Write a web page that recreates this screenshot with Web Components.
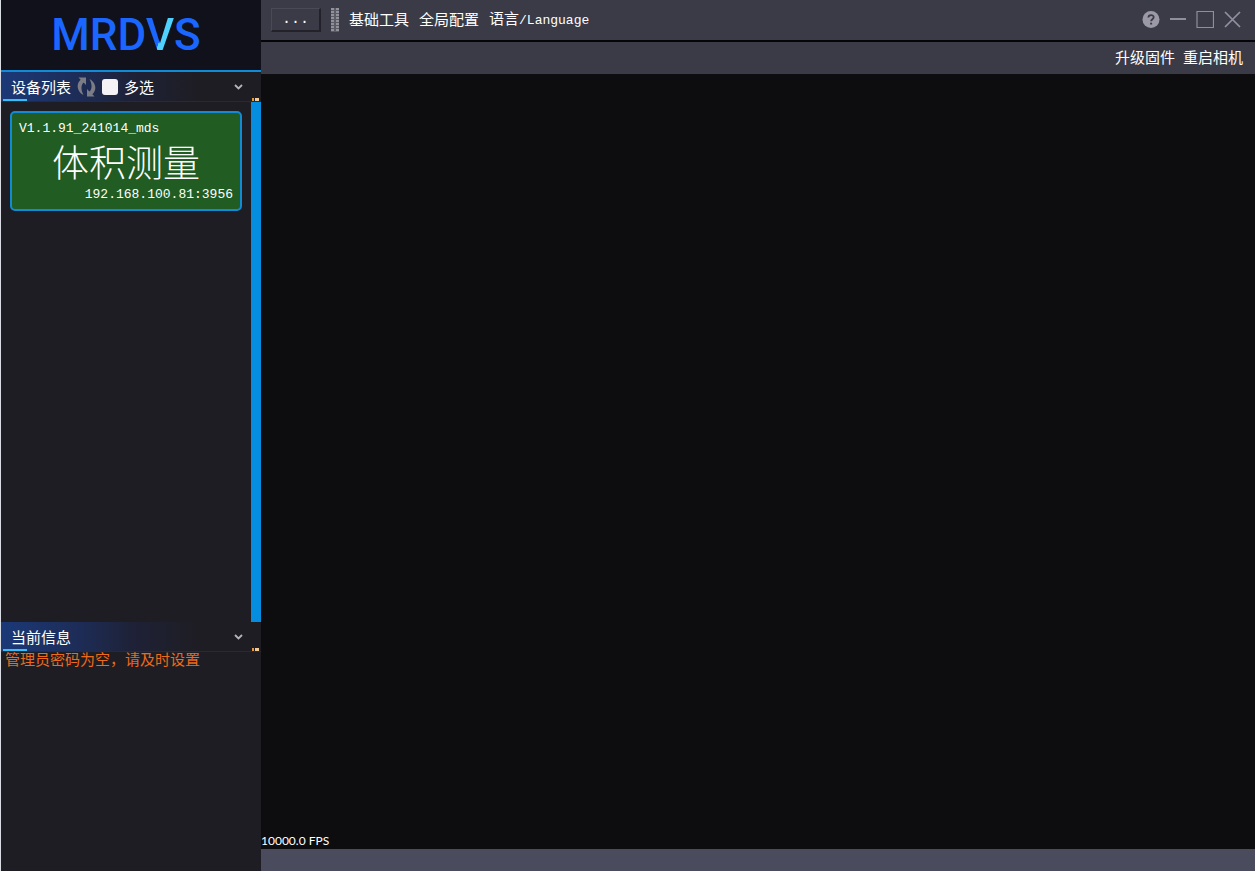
<!DOCTYPE html>
<html lang="zh">
<head>
<meta charset="utf-8">
<title>MRDVS</title>
<style>
  html, body { height: 100%; margin: 0; }
  body {
    background: #0d0c0f;
    color: #ffffff;
    font: 15px/20px "Noto Sans CJK SC", "Liberation Sans", sans-serif;
  }
</style>
</head>
<body>
<viewer-app>
  <brand-logo slot="side"></brand-logo>
  <side-panel slot="side" class="devices" heading="设备列表">
    <device-tools slot="tools"></device-tools>
    <device-list>
      <device-card version="V1.1.91_241014_mds" address="192.168.100.81:3956">体积测量</device-card>
    </device-list>
  </side-panel>
  <side-panel slot="side" class="info" heading="当前信息">
    <info-message>管理员密码为空，请及时设置</info-message>
  </side-panel>
  <title-bar slot="main"></title-bar>
  <camera-bar slot="main">
    <menu-button>升级固件</menu-button>
    <menu-button>重启相机</menu-button>
  </camera-bar>
  <camera-view slot="main" fps="10000.0"></camera-view>
  <status-bar slot="main"></status-bar>
</viewer-app>

<script>
const buttonReset = `
    button {
        padding: 0;
        border: none;
        background: none;
        color: inherit;
        font: inherit;
        cursor: pointer;
    }
`;

class ViewerApp extends HTMLElement {
  constructor() {
    super();
    this.attachShadow({ mode: "open" });
  }

  connectedCallback() {
    this.shadowRoot.innerHTML = `
    <style>
        :host { display: flex; height: 100vh; min-height: 400px; }
        aside {
            display: flex;
            flex-direction: column;
            flex: none;
            box-sizing: border-box;
            width: 261px;
            border-left: 1px solid #d9dce2;
            background: #1e1d23;
        }
        main { display: flex; flex-direction: column; flex: 1; min-width: 0; }
        ::slotted(.devices) { flex: 31 1 0; }
        ::slotted(.info) { flex: 14 1 0; }
        ::slotted(camera-view) { flex: 1; }
    </style>
    <aside><slot name="side"></slot></aside>
    <main><slot name="main"></slot></main>
    `;
  }
}

class BrandLogo extends HTMLElement {
  constructor() {
    super();
    this.attachShadow({ mode: "open" });
  }

  connectedCallback() {
    this.shadowRoot.innerHTML = `
    <style>
        :host {
            display: flex;
            align-items: center;
            justify-content: center;
            height: 70px;
            padding-right: 10px;
            border-bottom: 2px solid #128bd6;
            background: #10111a;
            color: #1a66ff;
            font: 500 44px/60px Roboto, sans-serif;
        }
        .beam {
            background: linear-gradient(108deg, #1a66ff 52%, #4fd2ff 53%);
            -webkit-background-clip: text;
            background-clip: text;
            color: transparent;
        }
    </style>
    <div>MRD<span class="beam">V</span>S</div>
    `;
  }
}

class SidePanel extends HTMLElement {
  constructor() {
    super();
    this.attachShadow({ mode: "open" });
  }

  connectedCallback() {
    this.shadowRoot.innerHTML = `
    <style>
        ${buttonReset}
        :host { display: flex; flex-direction: column; min-height: 0; }
        header {
            position: relative;
            display: flex;
            align-items: center;
            flex: none;
            box-sizing: border-box;
            height: 30px;
            gap: 6px;
            padding: 0 18px 0 10px;
            border-bottom: 1px solid #2a2a31;
            background: linear-gradient(90deg, #1b3978 0, #1d2c56 80px, #1e2238 130px, #1e1d23 200px);
        }
        h2 { margin: 0; font-size: 15px; font-weight: 400; }
        .fold { display: flex; margin-left: auto; }
        header::before {
            content: "";
            position: absolute;
            left: 2px;
            bottom: 0;
            width: 24px;
            height: 2px;
            background: #35c0f8;
        }
        header::after {
            content: "";
            position: absolute;
            right: 2px;
            bottom: 0;
            width: 7px;
            height: 3px;
            background: linear-gradient(90deg, #e79a3c 2px, #1e1d23 2px 3px, #f3c995 3px);
        }
    </style>
    <header>
        <h2>${this.getAttribute("heading")}</h2>
        <slot name="tools"></slot>
        <button class="fold" aria-label="折叠">
            <svg width="9" height="7" viewBox="0 0 9 7"><path d="M1 2L4.5 5.5L8 2" fill="none" stroke="#b4b4ba" stroke-width="1.8"/></svg>
        </button>
    </header>
    <slot></slot>
    `;
  }
}

class DeviceTools extends HTMLElement {
  constructor() {
    super();
    this.attachShadow({ mode: "open" });
  }

  connectedCallback() {
    this.shadowRoot.innerHTML = `
    <style>
        ${buttonReset}
        :host { display: flex; align-items: center; gap: 6px; }
        button { display: flex; }
        label { display: flex; align-items: center; gap: 6px; }
        input {
            appearance: none;
            width: 16px;
            height: 16px;
            margin: 0;
            border-radius: 3px;
            background: #f4f2f6;
        }
        input:checked { background: #128bd6; }
    </style>
    <button aria-label="刷新">
        <svg width="19" height="20" viewBox="0 0 19 20" fill="#7c7d84">
            <path d="M1.5 0.5H9V8L6.6 5.4C4 7.8 3.6 12.5 6.5 18C0.6 15 -1.6 7.6 3.6 2.8Z"/>
            <path d="M17.5 19.5H10V12L12.4 14.6C15 12.2 15.4 7.5 12.5 2C18.4 5 20.6 12.4 15.4 17.2Z"/>
        </svg>
    </button>
    <label><input type="checkbox">多选</label>
    `;
  }
}

class DeviceList extends HTMLElement {
  constructor() {
    super();
    this.attachShadow({ mode: "open" });
  }

  connectedCallback() {
    this.shadowRoot.innerHTML = `
    <style>
        :host { display: flex; flex: 1; min-height: 0; }
        .items { flex: 1; padding: 9px; }
        .scroll { width: 10px; background: #058de0; }
    </style>
    <div class="items"><slot></slot></div>
    <div class="scroll"></div>
    `;
  }
}

class DeviceCard extends HTMLElement {
  constructor() {
    super();
    this.attachShadow({ mode: "open" });
  }

  connectedCallback() {
    this.shadowRoot.innerHTML = `
    <style>
        :host {
            display: flex;
            flex-direction: column;
            padding: 6px 7px 4px;
            border: 2px solid #128bd6;
            border-radius: 5px;
            background: #215c22;
        }
        .meta { font: 13px/20px "Liberation Mono", monospace; }
        .name {
            margin-bottom: 2px;
            text-align: center;
            font-size: 37px;
            font-weight: 300;
            line-height: 44px;
        }
        .address { text-align: right; }
    </style>
    <div class="meta">${this.getAttribute("version")}</div>
    <div class="name"><slot></slot></div>
    <div class="meta address">${this.getAttribute("address")}</div>
    `;
  }
}

class InfoMessage extends HTMLElement {
  constructor() {
    super();
    this.attachShadow({ mode: "open" });
  }

  connectedCallback() {
    this.shadowRoot.innerHTML = `
    <style>
        :host { display: block; padding: 0 4px; color: #ec6a1c; line-height: 14px; }
    </style>
    <slot></slot>
    `;
  }
}

class MenuButton extends HTMLElement {
  constructor() {
    super();
    this.attachShadow({ mode: "open" });
  }

  connectedCallback() {
    this.shadowRoot.innerHTML = `
    <style>
        ${buttonReset}
        :host { display: block; }
        button { display: block; padding-bottom: 2px; white-space: nowrap; }
    </style>
    <button><slot></slot></button>
    `;
  }
}

class TitleBar extends HTMLElement {
  constructor() {
    super();
    this.attachShadow({ mode: "open" });
  }

  connectedCallback() {
    this.shadowRoot.innerHTML = `
    <style>
        ${buttonReset}
        :host {
            display: flex;
            align-items: center;
            justify-content: space-between;
            flex: none;
            box-sizing: border-box;
            height: 42px;
            padding: 0 14px 0 10px;
            border-bottom: 2px solid #050508;
            background: #3b3b47;
        }
        nav, .window { display: flex; align-items: center; gap: 10px; }
        .more {
            width: 50px;
            height: 24px;
            border: 1px solid #4a4954;
            border-right: 2px solid #23222b;
            border-bottom: 2px solid #23222b;
            font: 15px/20px "Liberation Mono", monospace;
        }
        .grip {
            width: 8px;
            height: 24px;
            background:
                linear-gradient(90deg, transparent 3px, #5c5c66 3px 5px, transparent 5px),
                repeating-linear-gradient(180deg, #92929a 0 2px, #5c5c66 2px 3px);
        }
        .latin { font: 13px/20px "Liberation Mono", monospace; }
        .window button { display: flex; }
        .window svg { display: block; }
    </style>
    <nav>
        <button class="more">...</button>
        <span class="grip"></span>
        <menu-button>基础工具</menu-button>
        <menu-button>全局配置</menu-button>
        <menu-button>语言<span class="latin">/Language</span></menu-button>
    </nav>
    <div class="window">
        <button aria-label="帮助">
            <svg width="18" height="18" viewBox="0 0 18 18" fill="none">
                <circle cx="9" cy="8.5" r="8.5" fill="#9a99a5"/>
                <path d="M6.4 6.5C6.4 3.3 11.7 3.3 11.7 6.3C11.7 8.2 9.1 8.2 9.1 10.3" stroke="#3b3b47" stroke-width="1.8"/>
                <path d="M8.1 11.7H10.1V13.5H8.1Z" fill="#3b3b47"/>
            </svg>
        </button>
        <button aria-label="最小化">
            <svg width="16" height="18" viewBox="0 0 16 18"><path d="M0 8H16" stroke="#8f8e9b" stroke-width="2"/></svg>
        </button>
        <button aria-label="最大化">
            <svg width="18" height="18" viewBox="0 0 18 18"><path d="M1 0.5H17.5V16.5H1Z" fill="none" stroke="#8f8e9b" stroke-width="1.2"/></svg>
        </button>
        <button aria-label="关闭">
            <svg width="17" height="18" viewBox="0 0 17 18"><path d="M1 1L16 16M16 1L1 16" stroke="#9190a0" stroke-width="1.7"/></svg>
        </button>
    </div>
    `;
  }
}

class CameraBar extends HTMLElement {
  constructor() {
    super();
    this.attachShadow({ mode: "open" });
  }

  connectedCallback() {
    this.shadowRoot.innerHTML = `
    <style>
        :host {
            display: flex;
            align-items: center;
            justify-content: flex-end;
            flex: none;
            height: 32px;
            gap: 8px;
            padding: 0 12px;
            background: #3b3b47;
        }
    </style>
    <slot></slot>
    `;
  }
}

class CameraView extends HTMLElement {
  constructor() {
    super();
    this.attachShadow({ mode: "open" });
  }

  connectedCallback() {
    this.shadowRoot.innerHTML = `
    <style>
        :host {
            display: flex;
            align-items: flex-end;
            min-height: 0;
            background: #0d0c0f;
            font: 12px/16px Lato, sans-serif;
        }
    </style>
    <output>${this.getAttribute("fps")} FPS</output>
    `;
  }
}

class StatusBar extends HTMLElement {
  constructor() {
    super();
    this.attachShadow({ mode: "open" });
  }

  connectedCallback() {
    this.shadowRoot.innerHTML = `
    <style>
        :host { display: block; flex: none; height: 22px; background: #4a4c5e; }
    </style>
    `;
  }
}

customElements.define("menu-button", MenuButton);
customElements.define("viewer-app", ViewerApp);
customElements.define("brand-logo", BrandLogo);
customElements.define("side-panel", SidePanel);
customElements.define("device-tools", DeviceTools);
customElements.define("device-list", DeviceList);
customElements.define("device-card", DeviceCard);
customElements.define("info-message", InfoMessage);
customElements.define("title-bar", TitleBar);
customElements.define("camera-bar", CameraBar);
customElements.define("camera-view", CameraView);
customElements.define("status-bar", StatusBar);
</script>
</body>
</html>
